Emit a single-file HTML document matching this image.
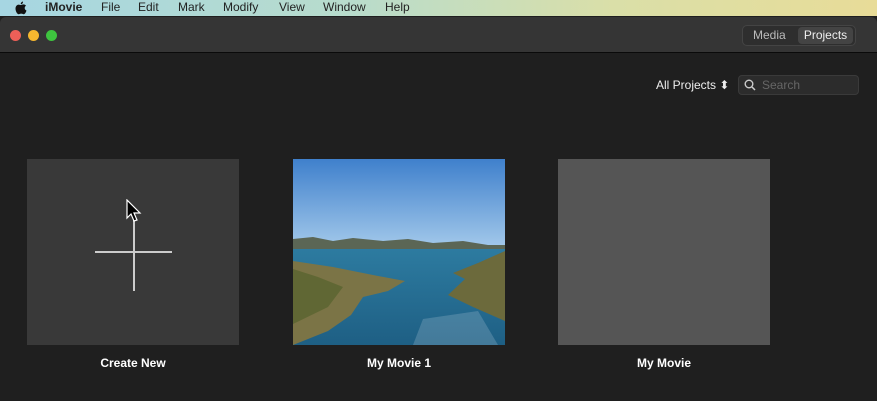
<!DOCTYPE html>
<html><head><style>
body{margin:0;width:877px;height:401px;overflow:hidden;background:#1f1f1f;font-family:"Liberation Sans",Arial,sans-serif;position:relative}
.menu{position:absolute;left:0;top:0;width:877px;height:16px;background:linear-gradient(90deg,#a6d6e2,#b8dccc 40%,#dadfa8 70%,#e8dc98);font-size:12px;color:#222}
.menu span{position:absolute;top:0px}
.title{position:absolute;left:0;top:17px;width:877px;height:35px;background:#353535;border-bottom:1px solid #0a0a0a;border-radius:6px 6px 0 0}
.dot{position:absolute;top:30px;width:11px;height:11px;border-radius:50%}
.seg{position:absolute;left:742px;top:25px;width:112px;height:19px;border:1px solid #444;border-radius:5px;background:#2e2e2e;font-size:12px;color:#bbb}
.seg .p{position:absolute;left:55px;top:1px;width:55px;height:17px;background:#444;border-radius:4px;color:#eee;text-align:center;line-height:17px}
.card{position:absolute;top:159px;width:212px;height:186px}
.lbl{position:absolute;top:356px;width:212px;text-align:center;color:#fff;font-weight:bold;font-size:12px}
</style></head><body>
<div class="menu">
<svg style="position:absolute;left:15px;top:1px" width="12" height="14" viewBox="0 0 12 14"><path d="M8 0.5 C8.2 1.8 7.2 3.2 5.8 3.2 C5.6 2 6.6 0.7 8 0.5Z M5.9 4 C6.7 4 7.5 3.4 8.5 3.4 C9.5 3.4 10.5 4 11 4.8 C9 6 9.4 8.8 11.5 9.6 C11 11 10 13.2 8.7 13.2 C7.8 13.2 7.4 12.6 6.2 12.6 C5 12.6 4.5 13.2 3.7 13.2 C2.3 13.2 0.5 10.4 0.5 7.6 C0.5 5 2.2 3.6 3.7 3.6 C4.6 3.6 5.2 4 5.9 4Z" fill="#111"/></svg>
<span style="left:45px;font-weight:bold">iMovie</span>
<span style="left:101px">File</span><span style="left:138px">Edit</span><span style="left:178px">Mark</span><span style="left:223px">Modify</span><span style="left:279px">View</span><span style="left:323px">Window</span><span style="left:385px">Help</span>
</div>
<div class="title"></div>
<div class="dot" style="left:10px;background:#ed5f58"></div>
<div class="dot" style="left:28px;background:#f5b72f"></div>
<div class="dot" style="left:46px;background:#3ec43f"></div>
<div class="seg"><span style="position:absolute;left:10px;top:2px">Media</span><div class="p">Projects</div></div>
<div style="position:absolute;left:656px;top:78px;color:#eee;font-size:12px">All Projects ⬍</div>
<div style="position:absolute;left:738px;top:75px;width:119px;height:18px;background:#2c2c2c;border:1px solid #3a3a3a;border-radius:4px;font-size:12px;color:#666">
<svg style="position:absolute;left:5px;top:3px" width="12" height="12"><circle cx="5" cy="5" r="3.8" stroke="#ccc" stroke-width="1.4" fill="none"/><line x1="8" y1="8" x2="11" y2="11" stroke="#ccc" stroke-width="1.5"/></svg>
<span style="position:absolute;left:23px;top:2px">Search</span></div>
<div class="card" style="left:27px;background:#393939">
<div style="position:absolute;left:68px;top:92px;width:77px;height:1.5px;background:#ccc"></div>
<div style="position:absolute;left:106px;top:54px;width:1.5px;height:78px;background:#ccc"></div>
<svg style="position:absolute;left:99px;top:40px" width="18" height="26"><path d="M1 1 L1 19 L5 15 L8 22 L11 21 L8 14 L14 14 Z" fill="#000" stroke="#fff" stroke-width="1.2"/></svg>
</div>
<div class="lbl" style="left:27px">Create New</div>
<div class="card" style="left:293px;overflow:hidden">
<svg width="212" height="186">
<defs><linearGradient id="s" x1="0" y1="0" x2="0" y2="1"><stop offset="0" stop-color="#3f80cc"/><stop offset="1" stop-color="#a2c8ea"/></linearGradient>
<linearGradient id="w" x1="0" y1="0" x2="0" y2="1"><stop offset="0" stop-color="#2d7ba0"/><stop offset="1" stop-color="#1e5f84"/></linearGradient></defs>
<rect width="212" height="88" fill="url(#s)"/>
<path d="M0 80 L20 78 L40 82 L60 79 L90 82 L115 80 L140 84 L170 82 L195 86 L212 86 L212 96 L0 96Z" fill="#5b6655"/>
<rect y="90" width="212" height="96" fill="url(#w)"/>
<path d="M0 102 L40 108 L80 116 L112 122 L95 132 L70 138 L58 156 L35 172 L0 186Z" fill="#7b7446"/>
<path d="M212 92 L185 104 L160 114 L172 120 L155 136 L180 148 L212 162Z" fill="#6c6a3c"/>
<path d="M0 110 L25 118 L50 128 L35 148 L0 165Z" fill="#55622c" opacity=".7"/>
<path d="M130 160 L185 152 L205 186 L120 186Z" fill="#9ab8cc" opacity=".3"/>
</svg></div>
<div class="lbl" style="left:293px">My Movie 1</div>
<div class="card" style="left:558px;background:#555"></div>
<div class="lbl" style="left:558px">My Movie</div>
</body></html>
